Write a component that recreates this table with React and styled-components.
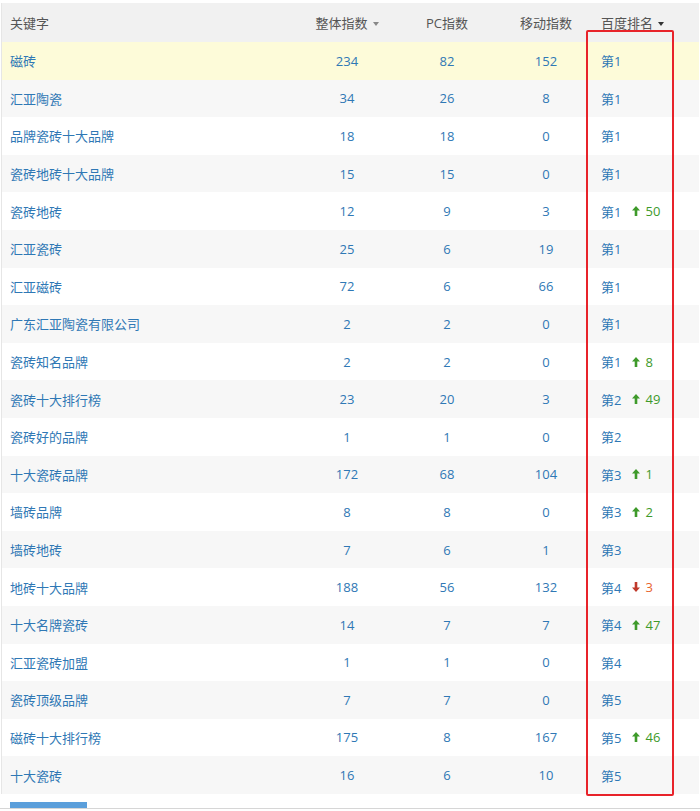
import React from "react";
import styled, { createGlobalStyle } from "styled-components";

const Global = createGlobalStyle`
  html, body { margin: 0; padding: 0; background: #fff; }
  body { font-family: "Open Sans", "Noto Sans CJK SC", sans-serif; font-size: 13px; }
`;

const Page = styled.div`
  position: relative;
  width: 700px;
  height: 811px;
  padding-top: 3px;
  box-sizing: border-box;
`;

const Table = styled.div`
  margin-left: 1px;
  border-left: 1px solid #e6e6e6;
  width: 697px;
`;

const Row = styled.div`
  display: grid;
  grid-template-columns: 295px 100px 100px 98px 1fr;
  align-items: center;
  height: ${(p) => (p.$head ? "39px" : "37.6px")};
  background: ${(p) =>
    p.$head ? "#f1f1f1" : p.$hl ? "#fdfbd9" : p.$odd ? "#f7f7f7" : "#ffffff"};
  color: ${(p) => (p.$head ? "#555555" : "#2f78b5")};
`;

const Cell = styled.div`
  display: flex;
  align-items: center;
  justify-content: ${(p) => (p.$center ? "center" : "flex-start")};
  padding-left: ${(p) => p.$pl || 0}px;
  white-space: nowrap;
  font-family: "Open Sans", "Noto Sans CJK SC", sans-serif;
  font-size: 13px;
`;

const Caret = styled.span`
  display: inline-block;
  margin-left: 5px;
  width: 0;
  height: 0;
  border-left: 3px solid transparent;
  border-right: 3px solid transparent;
  border-top: 4px solid ${(p) => (p.$dark ? "#333" : "#888")};
  transform: translateY(1px);
`;

const Change = styled.span`
  display: inline-flex;
  align-items: center;
  margin-left: 11px;
  color: ${(p) => (p.$down ? "#e8652e" : "#3e9a2a")};
`;

const Arrow = ({ down }) => (
  <svg width="8" height="10" viewBox="0 0 8 10" style={{ marginRight: 5, transform: down ? "rotate(180deg)" : "none" }}>
    <path d="M4 0 L8 4.5 L5.3 4.5 L5.3 10 L2.7 10 L2.7 4.5 L0 4.5 Z" fill={down ? "#c0392b" : "#3e9a2a"} />
  </svg>
);

const RedBox = styled.div`
  position: absolute;
  left: 586px;
  top: 30px;
  width: 84px;
  height: 762px;
  border: 2px solid #e8232a;
  border-radius: 2px;
  pointer-events: none;
`;

const Footer = styled.div`
  position: absolute;
  left: 0;
  right: 0;
  bottom: 2px;
  height: 6px;
  border-bottom: 1px solid #d6d6d6;
`;

const ScrollBar = styled.div`
  margin-left: 10px;
  width: 77px;
  height: 6px;
  background: #5b9fdb;
`;

const data = [
  ["磁砖", 234, 82, 152, 1],
  ["汇亚陶瓷", 34, 26, 8, 1],
  ["品牌瓷砖十大品牌", 18, 18, 0, 1],
  ["瓷砖地砖十大品牌", 15, 15, 0, 1],
  ["瓷砖地砖", 12, 9, 3, 1, 50],
  ["汇亚瓷砖", 25, 6, 19, 1],
  ["汇亚磁砖", 72, 6, 66, 1],
  ["广东汇亚陶瓷有限公司", 2, 2, 0, 1],
  ["瓷砖知名品牌", 2, 2, 0, 1, 8],
  ["瓷砖十大排行榜", 23, 20, 3, 2, 49],
  ["瓷砖好的品牌", 1, 1, 0, 2],
  ["十大瓷砖品牌", 172, 68, 104, 3, 1],
  ["墙砖品牌", 8, 8, 0, 3, 2],
  ["墙砖地砖", 7, 6, 1, 3],
  ["地砖十大品牌", 188, 56, 132, 4, -3],
  ["十大名牌瓷砖", 14, 7, 7, 4, 47],
  ["汇亚瓷砖加盟", 1, 1, 0, 4],
  ["瓷砖顶级品牌", 7, 7, 0, 5],
  ["磁砖十大排行榜", 175, 8, 167, 5, 46],
  ["十大瓷砖", 16, 6, 10, 5],
];

export default function App() {
  return (
    <Page>
      <Global />
      <Table>
        <Row $head>
          <Cell $pl={8}>关键字</Cell>
          <Cell $center>整体指数<Caret /></Cell>
          <Cell $center>PC指数</Cell>
          <Cell $center>移动指数</Cell>
          <Cell $pl={6}>百度排名<Caret $dark /></Cell>
        </Row>
        {data.map(([k, a, b, c, r, ch], i) => (
          <Row key={k} $hl={i === 0} $odd={i % 2 === 1}>
            <Cell $pl={8}>{k}</Cell>
            <Cell $center>{a}</Cell>
            <Cell $center>{b}</Cell>
            <Cell $center>{c}</Cell>
            <Cell $pl={6}>
              第{r}
              {ch !== undefined && (
                <Change $down={ch < 0}>
                  <Arrow down={ch < 0} />
                  {Math.abs(ch)}
                </Change>
              )}
            </Cell>
          </Row>
        ))}
      </Table>
      <RedBox />
      <Footer>
        <ScrollBar />
      </Footer>
    </Page>
  );
}
